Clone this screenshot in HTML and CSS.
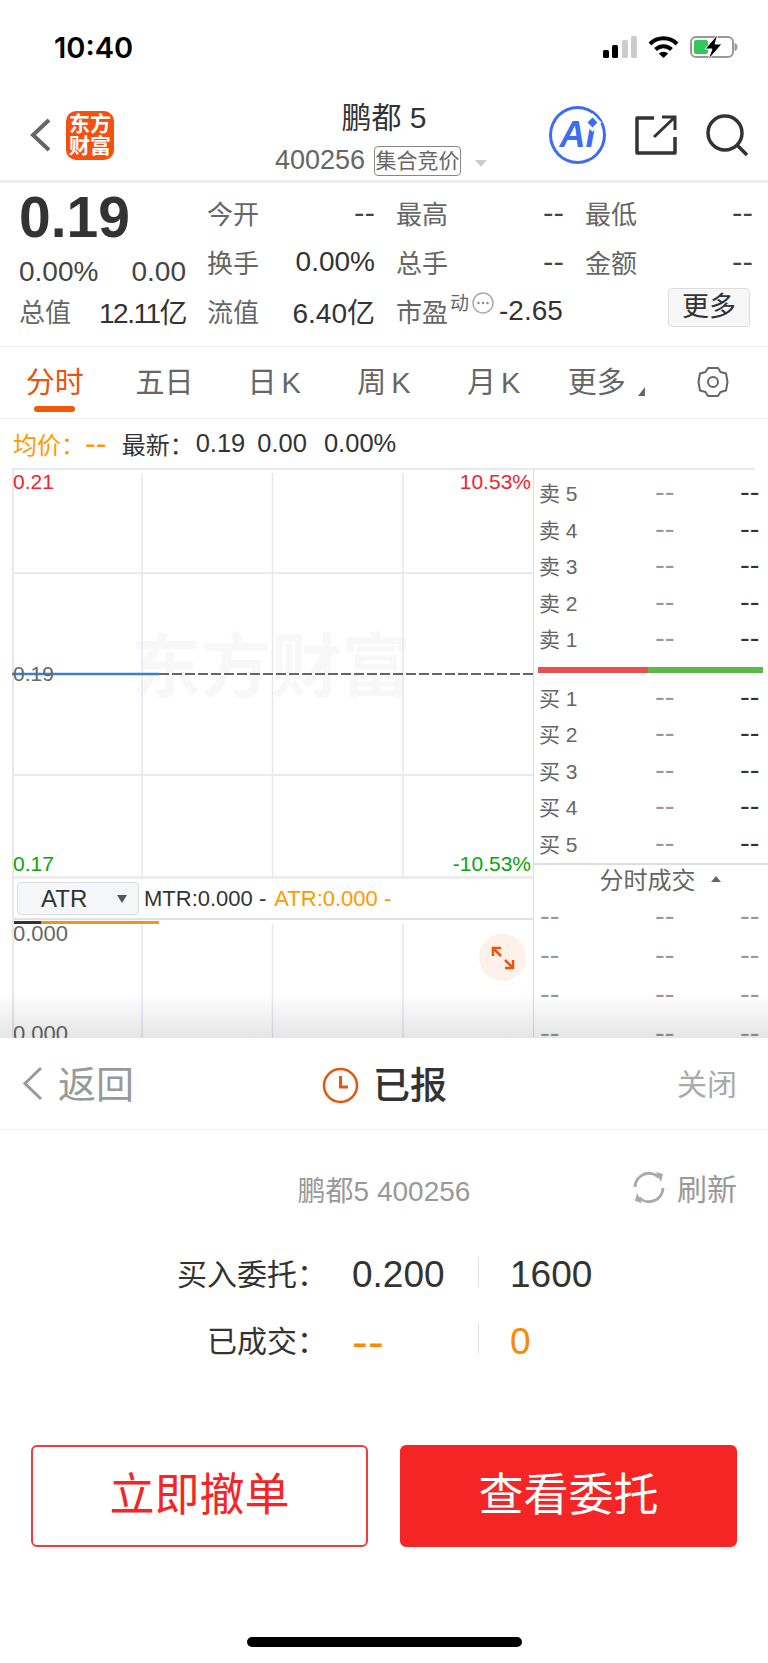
FILE: index.html
```html
<!DOCTYPE html>
<html lang="zh-CN">
<head>
    <meta charset="utf-8">
    <title>鹏都 5</title>
    <link rel="stylesheet" href="styles.css">
</head>
<body>
<div class="page">
    <div class="status-bar">
        <span class="time">10:40</span>
        <div class="status-icons">
            <svg width="34" height="22" viewBox="0 0 34 22"><rect x="0" y="14" width="6" height="8" rx="1.5" fill="#000"/><rect x="9" y="9" width="6" height="13" rx="1.5" fill="#000"/><rect x="19" y="4" width="6" height="18" rx="1.5" fill="#ccc"/><rect x="28" y="0" width="6" height="22" rx="1.5" fill="#ccc"/></svg>
            <svg width="31" height="22" viewBox="0 0 31 22"><path d="M2 8 A19 19 0 0 1 29 8" fill="none" stroke="#000" stroke-width="4"/><path d="M7.5 13.5 A11.5 11.5 0 0 1 23.5 13.5" fill="none" stroke="#000" stroke-width="4"/><path d="M15.5 22 L10.8 17.5 A7 7 0 0 1 20.2 17.5 Z" fill="#000"/></svg>
            <svg width="48" height="26" viewBox="0 0 48 26"><rect x="1" y="3" width="42" height="20" rx="5" fill="none" stroke="#999" stroke-width="2"/><rect x="4" y="6" width="14" height="14" rx="2" fill="#34c759"/><path d="M44.500 9 v8 a4 4 0 0 0 3-4 a4 4 0 0 0-3-4z" fill="#999"/><path d="M28 0 L15 15 H22 L18 26 L32 10 H25 Z" fill="#000" stroke="#fff" stroke-width="1"/></svg>
        </div>
    </div>

    <div class="nav">
        <svg class="nav-back" width="21" height="34" viewBox="0 0 21 34"><path d="M19 2 L3 17 L19 32" fill="none" stroke="#666" stroke-width="4"/></svg>
        <div class="logo"><span>东方</span><span>财富</span></div>
        <div class="nav-title">
            <div class="stock-name">鹏都 5</div>
            <div class="stock-sub">
                <span>400256</span>
                <span class="tag">集合竞价</span>
                <i class="tri-gray"></i>
            </div>
        </div>
        <div class="nav-icons">
            <div class="ai-btn">Ai<i class="ai-star"></i></div>
            <svg width="42" height="40" viewBox="0 0 42 40"><path d="M19 3 H2 V38 H40 V22" fill="none" stroke="#333" stroke-width="3.500" stroke-linejoin="round"/><path d="M19 22 L40 2 M27 2 H40 V15" fill="none" stroke="#333" stroke-width="3"/></svg>
            <svg width="42" height="42" viewBox="0 0 42 42"><circle cx="19" cy="19" r="17" fill="none" stroke="#333" stroke-width="3.500"/><path d="M31 31 L41 41" stroke="#333" stroke-width="3.500"/></svg>
        </div>
    </div>

    <div class="quote">
        <div class="price">0.19</div>
        <div class="stat"><span>今开</span><b class="dash">--</b></div>
        <div class="stat"><span>最高</span><b class="dash">--</b></div>
        <div class="stat"><span>最低</span><b class="dash">--</b></div>

        <div class="change"><span>0.00%</span><span>0.00</span></div>
        <div class="stat"><span>换手</span><b>0.00%</b></div>
        <div class="stat"><span>总手</span><b class="dash">--</b></div>
        <div class="stat"><span>金额</span><b class="dash">--</b></div>

        <div class="stat"><span>总值</span><b class="tight">12.11亿</b></div>
        <div class="stat"><span>流值</span><b>6.40亿</b></div>
        <div class="stat pe">
            <span>市盈</span><sup>动</sup>
            <svg width="22" height="22" viewBox="0 0 22 22"><circle cx="11" cy="11" r="10" fill="none" stroke="#aaa" stroke-width="1.500"/><circle cx="6.500" cy="11" r="1.200" fill="#888"/><circle cx="11" cy="11" r="1.200" fill="#888"/><circle cx="15.500" cy="11" r="1.200" fill="#888"/></svg>
            <b>-2.65</b>
        </div>
        <div class="more-cell"><div class="more-btn">更多</div></div>
    </div>

    <div class="tabs">
        <div class="tab active">分时</div>
        <div class="tab">五日</div>
        <div class="tab">日 K</div>
        <div class="tab">周 K</div>
        <div class="tab">月 K</div>
        <div class="tab tab-more">更多<i class="tri-corner"></i></div>
        <div class="tab tab-gear">
            <svg width="32" height="32" viewBox="0 0 32 32"><path d="M11 2 H21 L23.500 6 L29 7.500 L30.500 16 L29 24.500 L23.500 26 L21 30 H11 L8.500 26 L3 24.500 L1.500 16 L3 7.500 L8.500 6 Z" fill="none" stroke="#666" stroke-width="2" stroke-linejoin="round"/><circle cx="16" cy="16" r="5" fill="none" stroke="#666" stroke-width="2"/></svg>
        </div>
    </div>

    <div class="avg-row">
        <span class="orange">均价：</span>
        <span class="orange avg-dash">--</span>
        <span class="avg-latest">最新：</span>
        <span class="avg-num avg-first">0.19</span>
        <span class="avg-num">0.00</span>
        <span class="avg-num">0.00%</span>
    </div>

    <div class="market">
        <div class="charts">
            <div class="chart-main">
                <div class="watermark">东方财富</div>
                <svg class="chart-lines" width="521" height="409" viewBox="0 0 521 409">
                    <path d="M130 3 V409 M260.500 3 V409 M391 3 V409" fill="none" stroke="#e4e7ef" stroke-width="1.500"/>
                    <path d="M0 103 H521 M0 305 H521" fill="none" stroke="#e8eaf0" stroke-width="2"/>
                    <path d="M0 204 H147" stroke="#3a7fd5" stroke-width="2.500"/>
                    <path d="M147 204 H521" stroke="#666" stroke-width="2" stroke-dasharray="10 3"/>
                </svg>
                <span class="axis-label red top-left">0.21</span>
                <span class="axis-label red top-right">10.53%</span>
                <span class="axis-label mid-left">0.19</span>
                <span class="axis-label green bottom-left">0.17</span>
                <span class="axis-label green bottom-right">-10.53%</span>
            </div>
            <div class="indicator-row">
                <div class="indicator-select">ATR<i class="tri-down"></i></div>
                <span>MTR:0.000 -</span>
                <span class="orange">ATR:0.000 -</span>
            </div>
            <div class="chart-sub">
                <svg class="chart-lines" width="521" height="119" viewBox="0 0 521 119">
                    <path d="M130 4 V119 M260.500 4 V119 M391 4 V119" fill="none" stroke="#e4e7ef" stroke-width="1.500"/>
                    <path d="M0 2.500 H29" stroke="#333" stroke-width="3"/>
                    <path d="M29 2.500 H147" stroke="#e8962a" stroke-width="3"/>
                </svg>
                <span class="axis-label sub-top">0.000</span>
                <span class="axis-label sub-bottom">0.000</span>
                <div class="expand-btn">
                    <svg width="24" height="24" viewBox="0 0 24 24"><path d="M2 10 V2 H10 M2 2 L10 10 M22 14 V22 H14 M22 22 L14 14" fill="none" stroke="#e8550f" stroke-width="2.500"/></svg>
                </div>
            </div>
        </div>

        <div class="book">
            <div class="book-rows sell">
                <div class="book-row"><span>卖 5</span><em>--</em><b>--</b></div>
                <div class="book-row"><span>卖 4</span><em>--</em><b>--</b></div>
                <div class="book-row"><span>卖 3</span><em>--</em><b>--</b></div>
                <div class="book-row"><span>卖 2</span><em>--</em><b>--</b></div>
                <div class="book-row"><span>卖 1</span><em>--</em><b>--</b></div>
            </div>
            <div class="book-bar"><i class="bar-red"></i><i class="bar-green"></i></div>
            <div class="book-rows buy">
                <div class="book-row"><span>买 1</span><em>--</em><b>--</b></div>
                <div class="book-row"><span>买 2</span><em>--</em><b>--</b></div>
                <div class="book-row"><span>买 3</span><em>--</em><b>--</b></div>
                <div class="book-row"><span>买 4</span><em>--</em><b>--</b></div>
                <div class="book-row"><span>买 5</span><em>--</em><b>--</b></div>
            </div>
            <div class="trades-head">分时成交<i class="tri-up"></i></div>
            <div class="trade-row"><span>--</span><span>--</span><span>--</span></div>
            <div class="trade-row"><span>--</span><span>--</span><span>--</span></div>
            <div class="trade-row"><span>--</span><span>--</span><span>--</span></div>
            <div class="trade-row"><span>--</span><span>--</span><span>--</span></div>
        </div>
        <div class="sheet-shadow"></div>
    </div>

    <div class="sheet">
        <div class="sheet-head">
            <div class="sheet-back">
                <svg width="21" height="35" viewBox="0 0 21 35"><path d="M19 2 L3 17.500 L19 33" fill="none" stroke="#999" stroke-width="3"/></svg>
                <span>返回</span>
            </div>
            <div class="sheet-state">
                <svg width="37" height="37" viewBox="0 0 37 37"><circle cx="18.500" cy="18.500" r="16.500" fill="none" stroke="#e8550f" stroke-width="2.500"/><path d="M18.500 9 V20 H26" fill="none" stroke="#e8550f" stroke-width="3"/></svg>
                <span>已报</span>
            </div>
            <div class="sheet-close">关闭</div>
        </div>

        <div class="order-title">
            <span class="order-name">鹏都5 400256</span>
            <div class="refresh">
                <svg width="34" height="33" viewBox="0 0 34 33"><path d="M3 16 A14 14 0 0 1 27 6.500 M31 17 A14 14 0 0 1 7 26.500" fill="none" stroke="#aaa" stroke-width="3"/><path d="M24 1 L31 3 L29 11 Z M10 32 L3 30 L5 22 Z" fill="#aaa"/></svg>
                <span>刷新</span>
            </div>
        </div>

        <div class="order-grid">
            <span class="order-label">买入委托：</span>
            <span class="order-val">0.200</span>
            <span class="order-val order-qty">1600</span>
            <span class="order-label">已成交：</span>
            <span class="order-val orange-deep order-dash">--</span>
            <span class="order-val order-qty orange-deep">0</span>
        </div>

        <div class="actions">
            <div class="action-btn outline">立即撤单</div>
            <div class="action-btn solid">查看委托</div>
        </div>

        <div class="home-bar"></div>
    </div>
</div>
</body>
</html>
```

FILE: styles.css
```css
* {
    box-sizing: border-box;
}

body {
    margin: 0;
    background-color: #fff;
    font-family: "Liberation Sans", "Noto Sans CJK SC", sans-serif;
    color: #333;
}

i, em {
    font-style: normal;
}

.page {
    position: relative;
    width: 768px;
    height: 1663px;
    overflow: hidden;
}

.orange {
    color: #f90;
}

/* status bar */
.status-bar {
    display: flex;
    justify-content: space-between;
    align-items: center;
    height: 90px;
    padding: 4px 30px 0 54px;
}

.time {
    font-family: Inter, sans-serif;
    font-size: 29px;
    font-weight: 600;
    color: #000;
}

.status-icons {
    display: flex;
    align-items: center;
    gap: 11px;
}

/* nav */
.nav {
    position: relative;
    display: flex;
    align-items: center;
    height: 93px;
    padding: 0 20px 0 30px;
    border-bottom: 3px solid #eee;
}

.logo {
    display: flex;
    flex-direction: column;
    justify-content: center;
    align-items: center;
    width: 48px;
    height: 49px;
    margin-left: 15px;
    border-radius: 10px;
    background-color: #f6500f;
    color: #fff;
    font-size: 21px;
    font-weight: 700;
    line-height: 22px;
}

.nav-title {
    position: absolute;
    top: 8px;
    left: 275px;
    width: 218px;
}

.stock-name {
    text-align: center;
    font-size: 30px;
    line-height: 40px;
    color: #333;
}

.stock-sub {
    display: flex;
    align-items: center;
    margin-top: 7px;
    font-size: 27px;
    color: #666;
}

.tag {
    width: 87px;
    height: 30px;
    margin-left: 9px;
    border: 1px solid #888;
    border-radius: 4px;
    font-size: 21px;
    line-height: 27px;
    text-align: center;
}

.tri-gray {
    width: 0;
    height: 0;
    margin: 5px 0 0 14px;
    border-left: 6px solid transparent;
    border-right: 6px solid transparent;
    border-top: 7px solid #ccc;
}

.nav-icons {
    display: flex;
    align-items: center;
    gap: 29px;
    margin-left: auto;
}

.ai-btn {
    position: relative;
    width: 57px;
    height: 58px;
    border: 3px solid #3a6cf4;
    border-radius: 50%;
    color: #3a6cf4;
    font-family: "Liberation Sans", sans-serif;
    font-size: 36px;
    font-style: italic;
    font-weight: 700;
    line-height: 52px;
    text-align: center;
}

.ai-star {
    position: absolute;
    top: 10px;
    left: 37px;
    width: 7px;
    height: 7px;
    background-color: #3a6cf4;
    box-shadow: 0 0 0 3px #fff;
    transform: rotate(45deg);
}

/* quote */
.quote {
    display: grid;
    grid-template-columns: 167px 168px 168px 168px;
    grid-auto-rows: 49px;
    column-gap: 21px;
    height: 164px;
    padding: 5px 0 0 19px;
    border-bottom: 1px solid #eee;
}

.price {
    font-size: 57px;
    font-weight: 700;
    line-height: 59px;
    color: #333;
}

.stat {
    display: flex;
    justify-content: space-between;
    align-items: center;
    font-size: 26px;
    color: #666;
}

.stat b {
    font-size: 28px;
    font-weight: 400;
    color: #333;
}

.stat b.dash {
    font-family: "DejaVu Sans", sans-serif;
    font-size: 29px;
    color: #444;
}

.stat b.tight {
    letter-spacing: -1.500px;
}

.change {
    display: flex;
    justify-content: space-between;
    align-items: center;
    padding-top: 21px;
    font-size: 28px;
    color: #444;
}

.pe {
    justify-content: flex-start;
}

.pe sup {
    margin: -14px 3px 0 2px;
    font-size: 19px;
    line-height: 19px;
}

.pe svg {
    margin-top: -15px;
}

.pe b {
    margin-left: 5px;
}

.more-cell {
    display: flex;
    justify-content: flex-end;
    padding-right: 3px;
}

.more-btn {
    width: 82px;
    height: 39px;
    margin-top: 2px;
    border: 1px solid #ddd;
    border-radius: 4px;
    background-color: #f7f7f7;
    font-size: 27px;
    line-height: 36px;
    text-align: center;
}

/* tabs */
.tabs {
    display: grid;
    grid-template-columns: repeat(7, 109.7px);
    height: 72px;
    border-bottom: 1px solid #eee;
}

.tab {
    position: relative;
    display: flex;
    justify-content: center;
    align-items: center;
    padding-bottom: 6px;
    font-size: 29px;
    word-spacing: -3px;
    color: #666;
}

.tab-more {
    padding-left: 6px;
}

.tab-gear {
    padding-bottom: 2px;
}

.tab.active {
    color: #e8550f;
}

.tab.active::after {
    content: "";
    position: absolute;
    left: 34px;
    bottom: 6px;
    width: 41px;
    height: 6px;
    border-radius: 3px;
    background-color: #ee5a06;
}

.tri-corner {
    width: 0;
    height: 0;
    margin: 24px 0 0 12px;
    border-left: 7px solid transparent;
    border-bottom: 9px solid #666;
}

/* average row */
.avg-row {
    display: flex;
    align-items: center;
    height: 49px;
    padding: 0 0 1px 13px;
    font-size: 24px;
    color: #333;
}

.avg-dash {
    font-family: "DejaVu Sans", sans-serif;
    font-size: 30px;
}

.avg-latest {
    margin: 0 2px 0 15px;
}

.avg-num {
    margin-right: 17px;
    font-size: 25.500px;
}

.avg-first {
    margin-right: 12px;
}

/* chart + order book */
.market {
    position: relative;
    display: grid;
    grid-template-columns: 521px 235px;
    width: 743px;
    height: 570px;
    margin-left: 12px;
    border-top: 2px solid #e8e8ee;
}

.charts {
    display: flex;
    flex-direction: column;
    border-left: 2px solid #e6e8ee;
}

.chart-main {
    position: relative;
    flex: none;
    height: 409px;
    border-bottom: 3px solid #eee;
}

.chart-lines {
    position: absolute;
    top: 0;
    left: -2px;
}

.watermark {
    position: absolute;
    top: 158px;
    left: 117px;
    font-size: 70px;
    font-weight: 700;
    line-height: 80px;
    color: #f8f8f8;
    white-space: nowrap;
}

.axis-label {
    position: absolute;
    font-size: 21px;
    line-height: 24px;
    color: #666;
}

.red {
    color: #f5222d;
}

.green {
    color: #0aa50a;
}

.top-left {
    top: 0;
    left: -1px;
}

.top-right {
    top: 0;
    right: 2px;
}

.mid-left {
    top: 192px;
    left: -1px;
}

.bottom-left {
    top: 382px;
    left: -1px;
}

.bottom-right {
    top: 382px;
    right: 2px;
}

.indicator-row {
    display: flex;
    align-items: center;
    flex: none;
    gap: 8px;
    height: 41px;
    padding: 0 0 0 3px;
    border-bottom: 2px solid #e2e2e2;
    font-size: 22px;
}

.indicator-select {
    position: relative;
    width: 122px;
    height: 33px;
    margin-right: -3px;
    padding-left: 23px;
    border: 1px solid #ddd;
    border-radius: 4px;
    background-color: #f5f6f8;
    font-size: 24px;
    line-height: 31px;
}

.tri-down {
    position: absolute;
    top: 12px;
    right: 11px;
    border-left: 5px solid transparent;
    border-right: 5px solid transparent;
    border-top: 8px solid #555;
}

.chart-sub {
    position: relative;
    flex: 1;
    overflow: hidden;
}

.sub-top {
    top: 2px;
    left: -1px;
    font-size: 22px;
}

.sub-bottom {
    top: 102px;
    left: -1px;
    font-size: 22px;
}

.expand-btn {
    position: absolute;
    top: 14px;
    left: 465px;
    display: flex;
    justify-content: center;
    align-items: center;
    width: 47px;
    height: 47px;
    border-radius: 50%;
    background-color: #fdf1ea;
}

.book {
    position: relative;
    height: 568px;
    overflow: hidden;
    border-left: 1px solid #ddd;
    background-color: #fff;
}

.sell {
    padding-top: 4px;
}

.buy {
    margin: 6px 0 2px;
}

.book-row {
    display: grid;
    grid-template-columns: 116px 85px 26px;
    align-items: center;
    height: 36.500px;
    padding-left: 5px;
    font-size: 21px;
    color: #666;
}

.book-row em {
    font-family: "DejaVu Sans", sans-serif;
    font-size: 27px;
    line-height: 30px;
    color: #999;
}

.book-row b {
    font-family: "DejaVu Sans", sans-serif;
    font-size: 27px;
    font-weight: 400;
    line-height: 30px;
    color: #333;
}

.book-bar {
    display: flex;
    width: 225px;
    height: 6px;
    margin: 10px 0 0 4px;
}

.bar-red {
    width: 110px;
    background-color: #e94f4f;
}

.bar-green {
    flex: 1;
    background-color: #5cb947;
}

.trades-head {
    display: flex;
    justify-content: center;
    align-items: center;
    height: 33px;
    border-top: 2px solid #ddd;
    padding: 0 0 4px 18px;
    font-size: 24px;
    color: #666;
}

.tri-up {
    width: 0;
    height: 0;
    margin-left: 15px;
    border-left: 5px solid transparent;
    border-right: 5px solid transparent;
    border-bottom: 6px solid #666;
}

.trade-row {
    display: grid;
    grid-template-columns: 115px 85px 26px;
    align-items: center;
    height: 39px;
    padding-left: 6px;
    font-family: "DejaVu Sans", sans-serif;
    font-size: 27px;
    line-height: 30px;
    color: #999;
}

.sheet-shadow {
    position: absolute;
    left: -12px;
    bottom: 0;
    width: 768px;
    height: 46px;
    background: linear-gradient(to bottom, rgba(0, 0, 0, 0), rgba(0, 0, 0, 0.1));
}

/* bottom sheet */
.sheet {
    position: relative;
    height: 625px;
    background-color: #fff;
}

.sheet-head {
    position: relative;
    display: flex;
    justify-content: space-between;
    align-items: center;
    height: 92px;
    padding: 0 31px 0 22px;
    border-bottom: 1px solid #f0f0f0;
}

.sheet-back {
    display: flex;
    align-items: center;
    gap: 15px;
    font-size: 38px;
    color: #999;
}

.sheet-back span {
    margin-top: -5px;
}

.sheet-state {
    position: absolute;
    top: 27px;
    left: 322px;
    display: flex;
    align-items: center;
    gap: 14px;
    font-size: 37px;
    font-weight: 500;
    line-height: 38px;
    color: #333;
}

.sheet-state span {
    margin-top: 3px;
}

.sheet-close {
    margin-top: -4px;
    font-size: 30px;
    color: #aaa;
}

.order-title {
    position: relative;
    height: 108px;
    padding-top: 39px;
    text-align: center;
    font-size: 28px;
    color: #999;
}

.refresh {
    position: absolute;
    top: 35px;
    right: 31px;
    display: flex;
    align-items: center;
    gap: 11px;
    font-size: 30px;
}

.order-grid {
    display: grid;
    grid-template-columns: 327px 151px 290px;
    grid-auto-rows: 67px;
    align-items: center;
}

.order-label {
    text-align: right;
    font-size: 30px;
    color: #333;
}

.order-val {
    padding: 6px 0 0 25px;
    font-size: 37px;
    color: #333;
}

.order-dash {
    font-family: "DejaVu Sans", sans-serif;
    font-size: 44px;
    line-height: 40px;
}

.order-qty {
    height: 30px;
    padding: 0 0 0 31px;
    border-left: 1px solid #e0e0e0;
    line-height: 36px;
}

.orange-deep {
    color: #f80;
}

.actions {
    display: grid;
    grid-template-columns: 337px 337px;
    gap: 32px;
    margin-top: 73px;
    padding-left: 31px;
}

.action-btn {
    height: 102px;
    border-radius: 6px;
    font-size: 45px;
    line-height: 98px;
    text-align: center;
}

.outline {
    border: 2px solid #f43a3f;
    color: #f52525;
}

.solid {
    border: 2px solid #f52525;
    background-color: #f52525;
    color: #fff;
}

.home-bar {
    position: absolute;
    left: 247px;
    bottom: 16px;
    width: 275px;
    height: 10px;
    border-radius: 5px;
    background-color: #000;
}
```
